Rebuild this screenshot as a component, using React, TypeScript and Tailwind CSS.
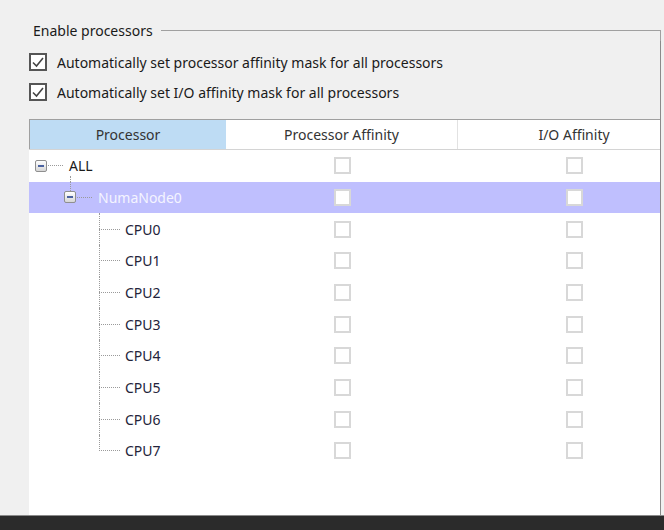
import React from "react";

type Node = { label: string; kind: "root" | "numa" | "cpu"; selected?: boolean; last?: boolean };

const nodes: Node[] = [
    { label: "ALL", kind: "root" },
    { label: "NumaNode0", kind: "numa", selected: true },
    ...Array.from({ length: 8 }, (_, i) => ({ label: `CPU${i}`, kind: "cpu" as const, last: i === 7 })),
];

const MinusBox = () => (
    <div className="w-[12px] h-[12px] shrink-0 rounded-[2px] border border-[#8f8f8f] bg-gradient-to-b from-white to-[#d6d6d6] flex items-center justify-center">
        <div className="w-[6px] h-[2px] bg-[#4b62a0]" />
    </div>
);

const CellBox = () => <div className="w-[17px] h-[17px] border-2 border-[#d8d8d8] bg-white" />;

const CheckRow = ({ label }: { label: string }) => (
    <div className="flex items-center h-[30px]">
        <div className="w-[18px] h-[18px] border-2 border-[#555] bg-white flex items-center justify-center">
            <svg width="14" height="14" viewBox="0 0 14 14" fill="none">
                <polyline points="2,7.5 5.5,11 12,3" stroke="#444" strokeWidth="1.6" />
            </svg>
        </div>
        <span className="ml-[10px] text-[14px] text-[#1a1a1a]">{label}</span>
    </div>
);

const TreeCell = ({ node }: { node: Node }) => {
    if (node.kind === "root") {
        return (
            <div className="relative w-[197px] shrink-0 h-full flex items-center pl-[6px]">
                <MinusBox />
                <span className="ml-px w-[15px] border-t border-dotted border-[#9a9a9a]" />
                <span className="ml-[6px] text-[14px] text-[#1b1b1b]">{node.label}</span>
                <span className="absolute left-[41px] top-[26px] bottom-0 border-l border-dotted border-[#9a9a9a]" />
            </div>
        );
    }
    if (node.kind === "numa") {
        return (
            <div className="relative w-[197px] shrink-0 h-full flex items-center pl-[35px]">
                <MinusBox />
                <span className="ml-px w-[15px] border-t border-dotted border-[#9a9a9a]" />
                <span className="ml-[6px] text-[14px] text-[#f4f4ff]">{node.label}</span>
                <span className="absolute left-[41px] top-0 h-[9px] border-l border-dotted border-[#9a9a9a]" />
            </div>
        );
    }
    return (
        <div className="relative w-[197px] shrink-0 h-full flex items-center pl-[70px]">
            <span className="w-[21px] border-t border-dotted border-[#9a9a9a]" />
            <span className="ml-[5px] text-[14px] text-[#23233a]">{node.label}</span>
            <span
                className={`absolute left-[70px] top-0 border-l border-dotted border-[#9a9a9a] ${node.last ? "h-1/2" : "bottom-0"}`}
            />
        </div>
    );
};

export default function App() {
    return (
        <div
            className="w-[664px] h-[530px] bg-[#f0f0f0] flex flex-col overflow-hidden"
            style={{ fontFamily: '"Noto Sans", "Open Sans", sans-serif' }}
        >
            <div className="flex-1 flex flex-col pl-[29px] pr-[3px] pt-[21px]">
                <div className="flex h-[20px]">
                    <span className="pl-[4px] pr-[8px] text-[14px] leading-[20px] text-[#1a1a1a]">Enable processors</span>
                    <div className="flex-1 mt-[9px] border-t border-r border-[#a0a0a0]" />
                </div>
                <div className="flex-1 flex flex-col border-r border-[#8a8a8a]">
                    <div className="pt-[6px]">
                        <CheckRow label="Automatically set processor affinity mask for all processors" />
                        <CheckRow label="Automatically set I/O affinity mask for all processors" />
                    </div>
                    <div className="mt-[12px] flex-1 flex flex-col bg-white border-t border-[#a0a0a0] overflow-hidden">
                        <div className="flex h-[30px] shrink-0 border-b border-[#d4d4d4] text-[14px] text-[#333]">
                            <div className="w-[197px] shrink-0 bg-[#bedcf4] border-l border-[#a0a0a0] flex items-center justify-center">
                                Processor
                            </div>
                            <div className="w-[232px] shrink-0 border-r border-[#e2e2e2] flex items-center justify-center">
                                Processor Affinity
                            </div>
                            <div className="w-[232px] shrink-0 flex items-center justify-center">I/O Affinity</div>
                        </div>
                        {nodes.map((n) => (
                            <div
                                key={n.label}
                                className={`flex h-[31.67px] shrink-0 ${n.selected ? "bg-[#bfbffe]" : "bg-white"}`}
                            >
                                <TreeCell node={n} />
                                <div className="w-[232px] shrink-0 flex items-center justify-center">
                                    <CellBox />
                                </div>
                                <div className="w-[232px] shrink-0 flex items-center justify-center">
                                    <CellBox />
                                </div>
                            </div>
                        ))}
                    </div>
                </div>
            </div>
            <div className="h-[15px] shrink-0 bg-[#2b2b2b] border-t border-[#8a8a8a]" />
        </div>
    );
}
